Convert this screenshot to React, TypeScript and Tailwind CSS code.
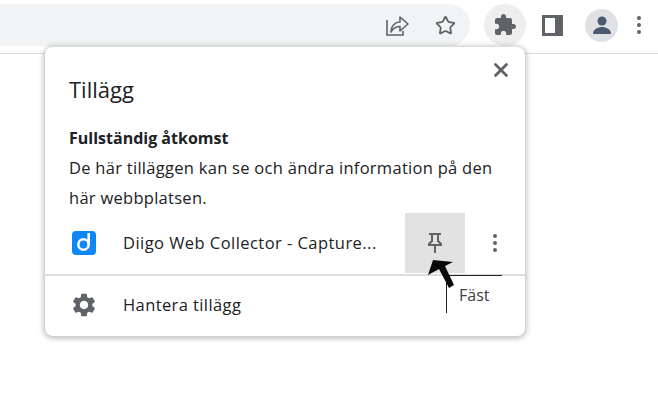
import React from "react";
import { Star, X } from "lucide-react";
import { MdSettings } from "react-icons/md";

const font = { fontFamily: '"Open Sans", "Noto Sans", sans-serif' };

function ShareIcon() {
  return (
    <svg width="24" height="24" viewBox="0 0 24 24" fill="none" stroke="#5f6368" strokeWidth="1.6">
      <path d="M2 7v15h16v-4" />
      <path d="M6 19c0-6 4-10 9-10V4l8 7-8 7v-4.500c-4 0-7 2-9 5.500z" strokeLinejoin="round" />
    </svg>
  );
}

function PuzzleIcon() {
  return (
    <svg width="24" height="24" viewBox="0 0 24 24" fill="#5f6368">
      <path d="M20.500 11H19V7c0-1.100-.9-2-2-2h-4V3.500C13 2.120 11.880 1 10.500 1S8 2.120 8 3.500V5H4c-1.100 0-2 .9-2 2v3.800h1.500c1.490 0 2.700 1.210 2.700 2.700s-1.210 2.700-2.700 2.700H2V20c0 1.100.9 2 2 2h3.800v-1.500c0-1.490 1.210-2.700 2.700-2.700s2.700 1.210 2.700 2.700V22H17c1.100 0 2-.9 2-2v-4h1.500c1.380 0 2.500-1.120 2.500-2.500S21.880 11 20.500 11z" />
    </svg>
  );
}

function PinIcon() {
  return (
    <svg width="16" height="20" viewBox="0 0 16 20" fill="none" stroke="#5f6368" strokeWidth="2">
      <path d="M2 1h12M5 1v7l-3 3v1h12v-1l-3-3V1M8 12v8" />
    </svg>
  );
}

function Dots() {
  return (
    <div className="flex flex-col gap-[3px]">
      <span className="size-1 rounded-full bg-[#5f6368]" />
      <span className="size-1 rounded-full bg-[#5f6368]" />
      <span className="size-1 rounded-full bg-[#5f6368]" />
    </div>
  );
}

export default function App() {
  return (
    <div className="relative h-[416px] w-[658px] overflow-hidden bg-white text-[#202124]" style={font}>
      {/* toolbar */}
      <div className="flex h-[54px] items-center border-b border-[#dcdcdc] bg-white pb-[3px]">
        <div className="flex h-[42px] w-[470px] items-center justify-end gap-[26px] rounded-r-[21px] bg-[#f1f3f4] pr-[14px]">
          <ShareIcon />
          <Star size={21} strokeWidth={2} color="#5f6368" />
        </div>
        <div className="ml-[14px] flex size-[42px] items-center justify-center rounded-full bg-[#eeeeee]">
          <PuzzleIcon />
        </div>
        <div className="ml-[16px] box-border h-[21px] w-[21px] border-[3px] border-r-[8px] border-[#5f6368]" />
        <div className="ml-[22px] flex size-[33px] items-center justify-center overflow-hidden rounded-full bg-[#dfe1e5]">
          <svg width="22" height="22" viewBox="0 0 22 22" fill="#4b5a70">
            <circle cx="11" cy="7" r="4.500" />
            <path d="M2 20c0-5 5-7 9-7s9 2 9 7z" />
          </svg>
        </div>
        <div className="ml-[19px]">
          <Dots />
        </div>
      </div>

      {/* extensions popup */}
      <div className="absolute left-[45px] top-[47px] flex h-[289px] w-[480px] flex-col rounded-[8px] bg-white shadow-[0_1px_5px_2px_rgba(60,64,67,0.3)]">
        <div className="flex h-[61px] items-start justify-between pl-[24px] pr-[12px]">
          <h1 className="mt-[26px] text-[22px] leading-[32px]">Tillägg</h1>
          <X size={22} strokeWidth={3} color="#5f6368" className="mt-[12px] mr-[1px]" />
        </div>
        <div className="mt-[15px] px-[24px]">
          <h2 className="text-[16px] font-bold leading-[30px]">Fullständig åtkomst</h2>
          <p className="whitespace-nowrap text-[16.500px] leading-[30px] tracking-[0.28px]">
            De här tilläggen kan se och ändra information på den
            <br />
            här webbplatsen.
          </p>
        </div>
        <div className="flex h-[60px] items-center">
          <div className="ml-[27px] size-[24px] rounded-[4px] bg-[#0f86f5]">
            <svg width="24" height="24" viewBox="0 0 24 24" fill="none" stroke="white" strokeWidth="2.600">
              <circle cx="11.500" cy="13.500" r="5.200" />
              <path d="M16.700 13.500V2" />
            </svg>
          </div>
          <span className="ml-[27px] w-[282px] whitespace-nowrap text-[16.500px] tracking-[0.45px]">Diigo Web Collector - Capture...</span>
          <div className="flex h-[60px] w-[60px] items-center justify-center bg-[#e2e2e2]">
            <PinIcon />
          </div>
          <div className="ml-[28px]">
            <Dots />
          </div>
        </div>
        <div className="mt-[1px] h-[2px] bg-[#dadce0]" />
        <div className="flex flex-1 items-center pb-[2px] pl-[25px]">
          <MdSettings size={28} color="#5f6368" />
          <span className="ml-[25px] text-[16.500px] tracking-[0.4px]">Hantera tillägg</span>
        </div>
      </div>

      {/* annotation over the popup */}
      <div className="absolute left-[446px] top-[275px] h-[38px] w-[56px] border-l border-t border-[#222]">
        <span className="absolute left-[12px] top-[8px] text-[16px] leading-[22px] text-[#3c4043]">Fäst</span>
      </div>
      <svg className="absolute left-[425px] top-[255px]" width="32" height="36" viewBox="0 0 32 36" fill="#0a0a0a">
        <path d="M8 5 28 7 20 11 29 30 24 33 14 14 3 20z" />
      </svg>
    </div>
  );
}
